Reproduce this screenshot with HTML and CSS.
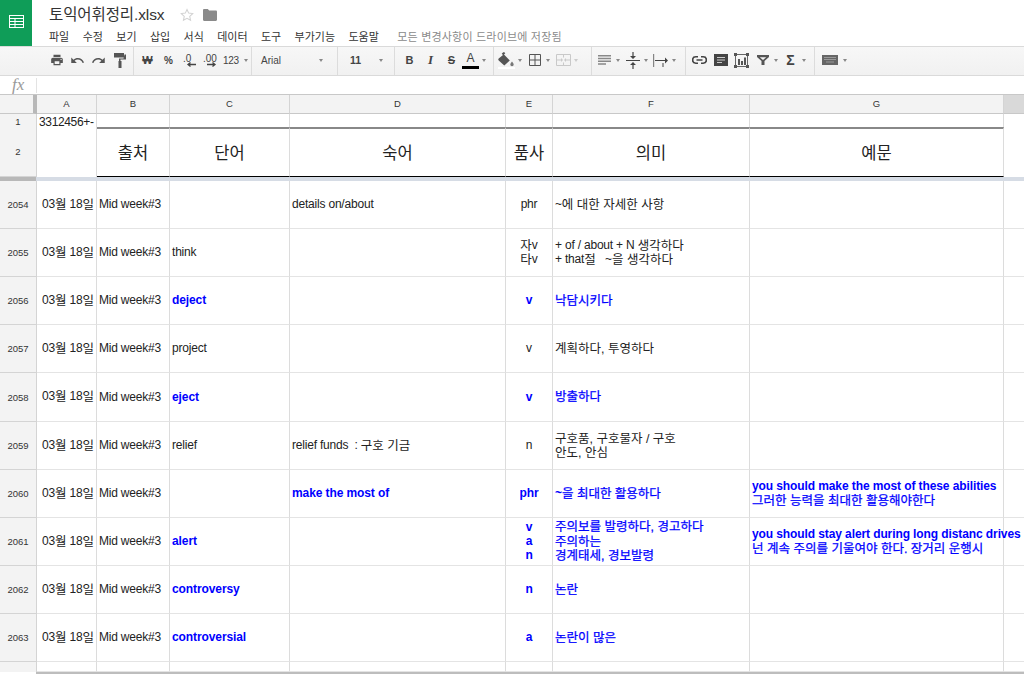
FILE: index.html
```html
<!DOCTYPE html>
<html lang="ko">
<head>
<meta charset="utf-8">
<title>토익어휘정리.xlsx</title>
<link rel="stylesheet" href="styles.css">
</head>
<body>
<header class="top">
  <div class="logo">
    <svg width="15" height="13" viewBox="0 0 15 13"><path fill="#fff" d="M0 0h15v13H0z"/><path fill="#0f9d58" d="M1 1h13v2H1zM1 4h4.500v2H1zM6.500 4H14v2H6.500zM1 7h4.500v2H1zM6.500 7H14v2H6.500zM1 10h4.500v2H1zM6.500 10H14v2H6.500z"/></svg>
  </div>
  <div class="doc">
    <div class="titlerow">
      <span class="title">토익어휘정리.xlsx</span>
      <svg class="star" width="14" height="14" viewBox="0 0 24 24"><path fill="none" stroke="#d2d2d2" stroke-width="1.800" d="M12 2.500l2.900 6.300 6.900.8-5.100 4.700 1.400 6.800-6.100-3.400-6.100 3.400 1.400-6.800-5.100-4.700 6.900-.8z"/></svg>
      <svg class="folder" width="14" height="12" viewBox="0 0 14 12"><path fill="#8a8a8a" d="M0 1.200C0 .5.500 0 1.200 0h3.600l1.400 1.600h6.600c.7 0 1.200.5 1.200 1.200v8c0 .7-.5 1.200-1.200 1.200H1.200C.5 12 0 11.500 0 10.800z"/></svg>
    </div>
    <nav class="menu">
      <span>파일</span><span>수정</span><span>보기</span><span>삽입</span><span>서식</span><span>데이터</span><span>도구</span><span>부가기능</span><span>도움말</span>
      <span class="saved">모든 변경사항이 드라이브에 저장됨</span>
    </nav>
  </div>
</header>

<div class="toolbar">
  <div class="grp g1">
    <span class="tool"><svg width="14" height="14" viewBox="0 0 24 24"><path fill="#555" d="M19 8H5c-1.660 0-3 1.340-3 3v6h4v4h12v-4h4v-6c0-1.660-1.340-3-3-3zm-3 11H8v-5h8v5zm3-7c-.55 0-1-.45-1-1s.45-1 1-1 1 .45 1 1-.45 1-1 1zm-1-9H6v4h12V3z"/></svg></span>
    <span class="tool"><svg width="15" height="15" viewBox="0 0 24 24"><path fill="#555" d="M12.500 8c-2.650 0-5.050.99-6.900 2.600L2 7v9h9l-3.620-3.620c1.390-1.160 3.160-1.880 5.120-1.880 3.540 0 6.550 2.310 7.600 5.500l2.370-.78C21.080 11.030 17.150 8 12.500 8z"/></svg></span>
    <span class="tool"><svg width="15" height="15" viewBox="0 0 24 24"><path fill="#555" d="M18.400 10.600C16.550 8.990 14.150 8 11.500 8c-4.650 0-8.580 3.030-9.960 7.220L3.900 16c1.050-3.190 4.050-5.500 7.600-5.500 1.950 0 3.730.72 5.120 1.880L13 16h9V7l-3.600 3.600z"/></svg></span>
    <span class="tool"><svg width="12" height="15" viewBox="0 0 12 15"><path fill="#555" d="M0 0h10v4.500H0zM10.500 1.500H12v5H6.500v1.500h1v7h-3V8h.5V5.500h4.500z"/></svg></span>
  </div>
  <div class="grp g2">
    <span class="tool txt b">₩</span>
    <span class="tool txt sm">%</span>
    <span class="tool"><svg width="14" height="15" viewBox="0 0 14 15"><text x="0" y="9" class="svgt">.0</text><path fill="none" stroke="#444" stroke-width="1.300" d="M13 11.500H5M7.500 9.500l-2.500 2 2.500 2"/></svg></span>
    <span class="tool"><svg width="16" height="15" viewBox="0 0 16 15"><text x="0" y="9" class="svgt">.00</text><path fill="none" stroke="#444" stroke-width="1.300" d="M4 11.500h8M9.500 9.500l2.500 2-2.500 2"/></svg></span>
    <span class="tool num">123<i class="caret"></i></span>
  </div>
  <div class="grp g3"><span class="fontname">Arial</span><i class="caret"></i></div>
  <div class="grp g4"><span class="fontsize">11</span><i class="caret"></i></div>
  <div class="grp g5">
    <span class="tool txt fmt"><b>B</b></span>
    <span class="tool txt fmt ital"><b>I</b></span>
    <span class="tool txt fmt strike">S</span>
    <span class="tool colorA"><span class="aletter">A</span><i class="abar"></i></span>
    <i class="caret tight"></i>
  </div>
  <div class="grp g6">
    <span class="tool fill"><svg width="17" height="17" viewBox="0 0 17 17"><path fill="#555" d="M6 0l1.300 1.300L6 2.600l5.800 5.800-5.500 5-5.600-5c-.6-.6-.6-1.200 0-1.800L5 3 3.700 1.700 5 .6z"/><path fill="#777" d="M14 9.500c1.100 1.500 1.700 2.300 1.700 3.100a1.700 1.700 0 0 1-3.400 0c0-.8.600-1.600 1.700-3.100z"/><path fill="#fff" d="M0 15h17v2H0z"/></svg></span>
    <i class="caret tight"></i>
    <span class="tool wide"><svg width="12" height="12" viewBox="0 0 12 12"><path fill="none" stroke="#555" d="M.5.500h11v11H.5zM6 .5v11M.5 6h11"/></svg></span>
    <i class="caret tight"></i>
    <span class="tool wide"><svg width="15" height="12" viewBox="0 0 15 12"><path fill="none" stroke="#c9c9c9" d="M.5.500h14v11H.5zM7.500.5v3M7.500 8.500v3M.5 6h5M14.500 6h-5"/><path fill="#c9c9c9" d="M5 4l2 2-2 2zM10 4L8 6l2 2z"/></svg></span>
    <i class="caret tight off"></i>
  </div>
  <div class="grp g7">
    <span class="tool"><svg width="13" height="10" viewBox="0 0 13 10"><path fill="#888" d="M0 0h13v1.500H0zM0 2.750h13v1.500H0zM0 5.500h13V7H0zM0 8.250h8v1.500H0z"/></svg></span>
    <i class="caret tight"></i>
    <span class="tool"><svg width="14" height="17" viewBox="0 0 14 17"><path fill="#444" d="M0 8h14v1H0zM6.400 0h1.200v4H10L7 7 4 4h2.400zM6.400 17h1.200v-4H10l-3-3-3 3h2.400z"/></svg></span>
    <i class="caret tight"></i>
    <span class="tool"><svg width="16" height="13" viewBox="0 0 16 13"><path fill="#555" d="M0 0h1.200v13H0z" opacity=".7"/><path fill="#444" d="M2 6h10V3.500L15 6.500l-3 3V7H2zM9.500 9h1v4h-1z"/></svg></span>
    <i class="caret tight"></i>
  </div>
  <div class="grp g8">
    <span class="tool"><svg width="15" height="8" viewBox="0 0 15 8"><path fill="none" stroke="#444" stroke-width="1.600" d="M6 .8H3.800a3.200 3.200 0 0 0 0 6.400H6M9 .8h2.200a3.200 3.200 0 0 1 0 6.400H9M4.500 4h6"/></svg></span>
    <span class="tool"><svg width="14" height="12" viewBox="0 0 14 12"><path fill="#444" d="M0 0h14v12H0z"/><path fill="#ccc" d="M3 3h8v1H3zM3 5.500h8v1H3zM3 8h5v1H3z"/></svg></span>
    <span class="tool"><svg width="15" height="15" viewBox="0 0 15 15"><path fill="none" stroke="#666" d="M1.500 1.500h12v12h-12z"/><path fill="#555" d="M0 0h3v3H0zM12 0h3v3h-3zM0 12h3v3H0zM12 12h3v3h-3zM4 6h2v6H4zM7 8h2v4H7zM10 4.500h2V12h-2z"/></svg></span>
    <span class="tool"><svg width="12" height="10" viewBox="0 0 12 10"><path fill="#555" d="M0 0h12v2L7.500 6v4h-3V6L0 2zM2.800 2.200L6 5l3.200-2.800z"/></svg></span>
    <i class="caret tight"></i>
    <span class="tool sig">Σ</span>
    <i class="caret tight"></i>
  </div>
  <div class="grp g9">
    <span class="tool"><svg width="16" height="10" viewBox="0 0 16 10"><path fill="#666" d="M0 0h16v10H0z"/><path fill="#999" d="M2 2h12v1H2zM2 4h12v1H2zM4 6.500h8v1H4z"/></svg></span>
    <i class="caret tight"></i>
  </div>
</div>

<div class="fbar"><span class="fx">fx</span></div>

<div class="sheet">
  <div class="cols rhead">
    <div class="corner"></div>
    <div class="ch">A</div><div class="ch">B</div><div class="ch">C</div><div class="ch">D</div><div class="ch">E</div><div class="ch">F</div><div class="ch">G</div><div class="ch end"></div>
  </div>

  <div class="cols r1">
    <div class="rn">1</div>
    <div class="c first">3312456+-</div><div class="c"></div><div class="c"></div><div class="c"></div><div class="c"></div><div class="c"></div><div class="c"></div><div class="c last"></div>
  </div>

  <div class="cols r2">
    <div class="rn">2</div>
    <div class="c"></div>
    <div class="c h">출처</div><div class="c h">단어</div><div class="c h">숙어</div><div class="c h">품사</div><div class="c h">의미</div><div class="c h">예문</div>
    <div class="c last"></div>
  </div>

  <div class="freeze"><i class="fz-l"></i><i class="fz-r"></i></div>

  <div class="cols row">
    <div class="rn">2054</div><div class="c date"><div>03<span class="ko">월</span> 18<span class="ko">일</span></div></div><div class="c">Mid week#3</div><div class="c"></div>
    <div class="c">details on/about</div><div class="c ctr">phr</div><div class="c"><div>~<span class="ko">에 대한 자세한 사항</span></div></div><div class="c"></div><div class="c last"></div>
  </div>
  <div class="cols row">
    <div class="rn">2055</div><div class="c date"><div>03<span class="ko">월</span> 18<span class="ko">일</span></div></div><div class="c">Mid week#3</div><div class="c">think</div>
    <div class="c"></div><div class="c ctr"><div><span class="ko">자</span>v<br><span class="ko">타</span>v</div></div><div class="c"><div>+ of / about + N <span class="ko">생각하다</span><br>+ that<span class="ko">절</span> &nbsp; ~<span class="ko">을 생각하다</span></div></div><div class="c"></div><div class="c last"></div>
  </div>
  <div class="cols row">
    <div class="rn">2056</div><div class="c date"><div>03<span class="ko">월</span> 18<span class="ko">일</span></div></div><div class="c">Mid week#3</div><div class="c bl">deject</div>
    <div class="c"></div><div class="c ctr bl">v</div><div class="c bl"><div><span class="ko">낙담시키다</span></div></div><div class="c"></div><div class="c last"></div>
  </div>
  <div class="cols row">
    <div class="rn">2057</div><div class="c date"><div>03<span class="ko">월</span> 18<span class="ko">일</span></div></div><div class="c">Mid week#3</div><div class="c">project</div>
    <div class="c"></div><div class="c ctr">v</div><div class="c"><div><span class="ko">계획하다, 투영하다</span></div></div><div class="c"></div><div class="c last"></div>
  </div>
  <div class="cols row tall">
    <div class="rn">2058</div><div class="c date"><div>03<span class="ko">월</span> 18<span class="ko">일</span></div></div><div class="c">Mid week#3</div><div class="c bl">eject</div>
    <div class="c"></div><div class="c ctr bl">v</div><div class="c bl"><div><span class="ko">방출하다</span></div></div><div class="c"></div><div class="c last"></div>
  </div>
  <div class="cols row">
    <div class="rn">2059</div><div class="c date"><div>03<span class="ko">월</span> 18<span class="ko">일</span></div></div><div class="c">Mid week#3</div><div class="c">relief</div>
    <div class="c"><div>relief funds &nbsp;: <span class="ko">구호 기금</span></div></div><div class="c ctr">n</div><div class="c"><div><span class="ko">구호품, 구호물자 / 구호<br>안도, 안심</span></div></div><div class="c"></div><div class="c last"></div>
  </div>
  <div class="cols row">
    <div class="rn">2060</div><div class="c date"><div>03<span class="ko">월</span> 18<span class="ko">일</span></div></div><div class="c">Mid week#3</div><div class="c"></div>
    <div class="c bl">make the most of</div><div class="c ctr bl">phr</div><div class="c bl"><div>~<span class="ko">을 최대한 활용하다</span></div></div><div class="c bl"><div>you should make the most of these abilities<br><span class="ko">그러한 능력을 최대한 활용해야한다</span></div></div><div class="c last"></div>
  </div>
  <div class="cols row">
    <div class="rn">2061</div><div class="c date"><div>03<span class="ko">월</span> 18<span class="ko">일</span></div></div><div class="c">Mid week#3</div><div class="c bl">alert</div>
    <div class="c"></div><div class="c ctr bl"><div>v<br>a<br>n</div></div><div class="c bl"><div><span class="ko">주의보를 발령하다, 경고하다<br>주의하는<br>경계태세, 경보발령</span></div></div><div class="c bl over"><div>you should stay alert during long distanc drives<br><span class="ko">넌 계속 주의를 기울여야 한다. 장거리 운행시</span></div></div><div class="c last"></div>
  </div>
  <div class="cols row">
    <div class="rn">2062</div><div class="c date"><div>03<span class="ko">월</span> 18<span class="ko">일</span></div></div><div class="c">Mid week#3</div><div class="c bl">controversy</div>
    <div class="c"></div><div class="c ctr bl">n</div><div class="c bl"><div><span class="ko">논란</span></div></div><div class="c"></div><div class="c last"></div>
  </div>
  <div class="cols row">
    <div class="rn">2063</div><div class="c date"><div>03<span class="ko">월</span> 18<span class="ko">일</span></div></div><div class="c">Mid week#3</div><div class="c bl">controversial</div>
    <div class="c"></div><div class="c ctr bl">a</div><div class="c bl"><div><span class="ko">논란이 많은</span></div></div><div class="c"></div><div class="c last"></div>
  </div>
  <div class="cols tail">
    <div class="rn noborder"></div><div class="c"></div><div class="c"></div><div class="c"></div><div class="c"></div><div class="c"></div><div class="c"></div><div class="c"></div><div class="c last"></div>
  </div>
  <div class="endbar"></div>
</div>
</body>
</html>
```
FILE: styles.css
```css
* { box-sizing: border-box; }
html, body { margin: 0; height: 675px; overflow: hidden; background: #fff; }
body { font-family: "Liberation Sans", "Noto Sans CJK KR", sans-serif; color: #222; }

/* top header */
.top { display: flex; height: 46px; }
.logo { width: 32px; height: 46px; background: #0f9d58; display: flex; align-items: center; justify-content: center; padding-bottom: 3px; }
.doc { padding: 4px 0 0 17px; }
.titlerow { display: flex; align-items: center; height: 22px; }
.title { font-size: 15.500px; letter-spacing: -.1px; color: #333; line-height: 22px; width: 131px; }
.star { margin-right: 9px; }
.menu { display: flex; height: 20px; align-items: center; font-size: 11px; color: #333; gap: 13.400px; }
.saved { color: #8a8a8a; margin-left: 5px; letter-spacing: .2px; }

/* toolbar */
.toolbar { display: flex; height: 30px; padding-left: 46px; border-top: 1px solid #dadada; border-bottom: 1px solid #dadada; background: linear-gradient(#f7f7f7, #f1f1f1); }
.grp { display: flex; align-items: center; height: 28px; padding-bottom: 2px; border-right: 1px solid #dcdcdc; flex: none; }
.g1 { width: 88px; }
.g2 { width: 118px; padding-left: 3px; }
.g3 { width: 86px; padding-left: 9px; }
.g4 { width: 57px; padding-left: 12px; }
.g5 { width: 99px; padding-left: 4px; }
.g6 { width: 98px; padding-left: 2px; }
.g7 { width: 94px; padding-left: 2px; }
.g7 .caret.tight { margin-right: 2px; }
.g8 { width: 129px; padding-left: 3px; }
.g9 { width: 60px; padding-left: 4px; border-right: 0; }
.g9 .caret.tight { margin-left: 3px; }
.tool { width: 21px; height: 22px; flex: none; display: flex; align-items: center; justify-content: center; color: #444; }
.tool.wide { width: 20px; }
.txt { font-size: 11px; }
.b { font-weight: bold; }
.sm { font-size: 10px; font-weight: bold; }
.svgt { font: 10px "Liberation Sans", sans-serif; fill: #444; }
.num { width: 28px; font-size: 10px; letter-spacing: -.3px; margin-left: -1px; white-space: nowrap; justify-content: flex-start; padding-left: 3px; }
.num .caret { margin-left: 5px; }
.fontname, .fontsize { font-size: 10px; color: #444; }
.fontname { width: 58px; }
.fontsize { width: 29px; font-weight: bold; font-size: 10.500px; }
.caret { width: 0; height: 0; flex: none; border-left: 2.500px solid transparent; border-right: 2.500px solid transparent; border-top: 3px solid #888; }
.caret.tight { margin: 0 3px 0 1px; }
.caret.off { border-top-color: #ccc; }
.fmt { font-size: 11px; }
.ital { font-family: "Liberation Serif", serif; font-size: 13px; font-style: italic; }
.strike { text-decoration: line-through; font-weight: bold; }
.colorA { flex-direction: column; width: 17px; margin-right: 2px; font-size: 12px; }
.aletter { line-height: 13px; }
.abar { display: block; width: 17px; height: 3px; background: #000; margin-top: 1px; }
.sig { font-size: 14px; font-weight: bold; margin-left: -1px; }

/* formula bar */
.fbar { height: 18px; display: flex; align-items: center; }
.fx { width: 37px; height: 15px; padding-left: 12px; font: italic 17px/14px "Liberation Serif", serif; color: #999; border-right: 1px solid #e3e3e3; }

/* sheet */
.sheet { border-top: 1px solid #c8c8c8; }
.cols { display: grid; grid-template-columns: 37px 60px 73px 120px 216px 47px 197px 254px 20px; }
.rhead { height: 19px; }
.corner { background: #f3f3f3; border-right: 4px solid #b8b8b8; border-bottom: 1px solid #c8c8c8; }
.ch { background: #f3f3f3; border-right: 1px solid #d4d4d4; border-bottom: 1px solid #c8c8c8; font-size: 9.500px; line-height: 18px; text-align: center; color: #333; }
.ch.end { background: #d9d9d9; border-right: 0; }
.rn { background: #f3f3f3; border-right: 1px solid #d4d4d4; border-bottom: 1px solid #d4d4d4; font-size: 9.500px; color: #333; display: flex; align-items: center; justify-content: center; }
.rn.noborder { border-bottom: 0; }
.c { border-right: 1px solid #dcdcdc; border-bottom: 1px solid #e4e4e4; padding: 0 2px 1px; font-size: 12px; letter-spacing: -.2px; line-height: 14px; white-space: nowrap; display: flex; flex-direction: column; justify-content: center; color: #222; min-width: 0; }
.c.last { border-right: 0; }
.ko { font-size: 12.500px; letter-spacing: 0; font-weight: 400; line-height: 1; vertical-align: -1px; }
.r1 { height: 13px; }
.r1 .c { border-bottom: 0; line-height: 13px; }
.first { justify-content: flex-start; padding: 2px 0 0 2px; letter-spacing: -.35px; }
.r2 { height: 50px; }
.r2 .c { border-bottom: 0; padding-bottom: 0; }
.h { font-size: 16.500px; letter-spacing: 0; align-items: center; border-top: 2px solid #888; border-bottom: 1px solid #000 !important; }
.freeze { display: flex; height: 4px; }
.fz-l { width: 36px; background: #b8b8b8; }
.fz-r { flex: 1; background: #d6dce5; }
.row { height: 48px; }
.row.tall { height: 49px; }
.ctr { text-align: center; }
.date { align-items: flex-end; }
.bl { color: #00f; font-weight: bold; letter-spacing: -.1px; }
.bl .ko { -webkit-text-stroke: .25px #00f; }
.over { overflow: visible; }
.tail { height: 10px; }
.endbar { height: 2px; margin-left: 36px; background: #bdbdbd; }
```
